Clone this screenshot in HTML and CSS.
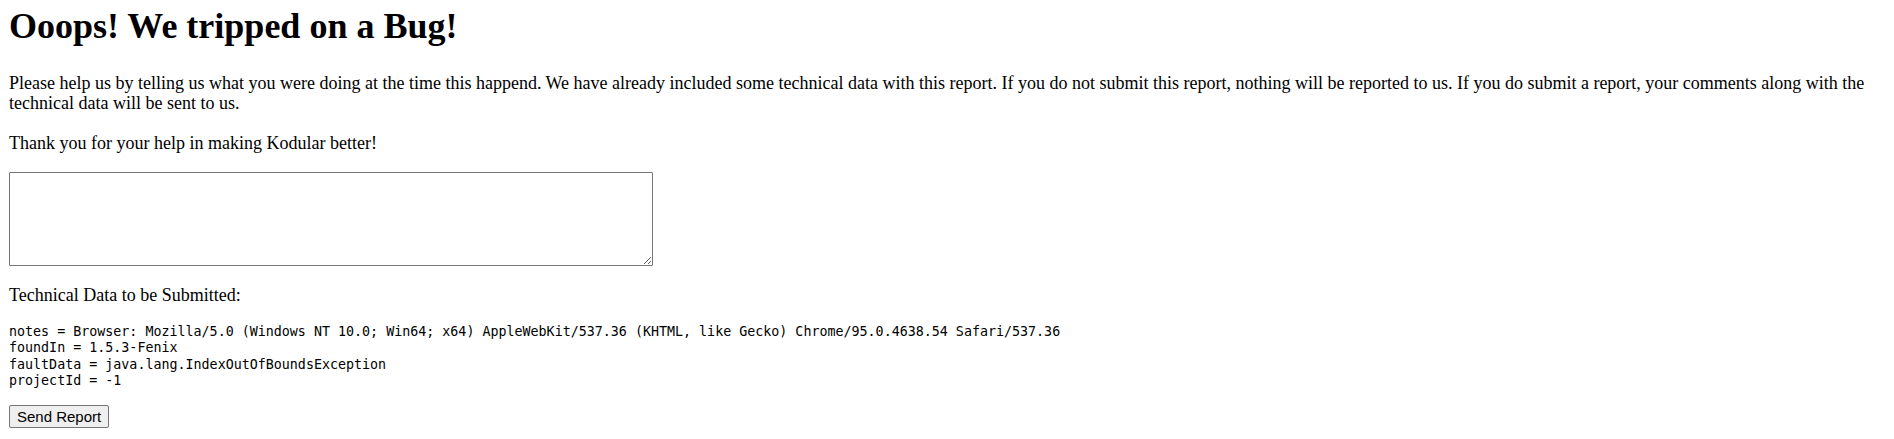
FILE: index.html
```html
<!DOCTYPE html>
<html>
<head>
<meta charset="utf-8">
<title>Bug Report</title>
<link rel="stylesheet" href="styles.css">
</head>
<body class="page">
<h1 class="title">Ooops! We tripped on a Bug!</h1>
<p class="text">Please help us by telling us what you were doing at the time this happend. We have already included some technical data with this report. If you do not submit this report, nothing will be reported to us. If you do submit a report, your comments along with the technical data will be sent to us.<br><br>Thank you for your help in making Kodular better!</p>
<textarea class="comments"></textarea>
<p class="text label">Technical Data to be Submitted:</p>
<pre class="data">notes = Browser: Mozilla/5.0 (Windows NT 10.0; Win64; x64) AppleWebKit/537.36 (KHTML, like Gecko) Chrome/95.0.4638.54 Safari/537.36
foundIn = 1.5.3-Fenix
faultData = java.lang.IndexOutOfBoundsException
projectId = -1</pre>
<button class="send">Send Report</button>
</body>
</html>
```
FILE: styles.css
```css
.page {
  margin: 5.5px 9px 0 9px;
  font-family: "Liberation Serif", "Times New Roman", serif;
  font-size: 18px;
  line-height: 20px;
  color: #000;
  background: #fff;
}
.title {
  font-size: 36px;
  line-height: 40px;
  font-weight: bold;
  margin: 0 0 27px 0;
}
.text {
  margin: 0;
}
.comments {
  display: block;
  width: 644px;
  height: 94px;
  box-sizing: border-box;
  border: 1px solid #767676;
  border-radius: 1px;
  padding: 2px;
  margin: 19px 0 0 0;
  background: #fff;
}
.label {
  margin-top: 19px;
}
.data {
  font-family: "DejaVu Sans Mono", "Liberation Mono", monospace;
  font-size: 13.34px;
  line-height: 16.5px;
  margin: 19px 0 0 0;
}
.send {
  display: block;
  margin-top: 15px;
  height: 23px;
  box-sizing: border-box;
  font-family: "Liberation Sans", Arial, sans-serif;
  font-size: 15px;
  line-height: 17px;
  padding: 2px 7px;
  background: #efefef;
  border: 1px solid #767676;
  border-radius: 2px;
  color: #000;
}
```
